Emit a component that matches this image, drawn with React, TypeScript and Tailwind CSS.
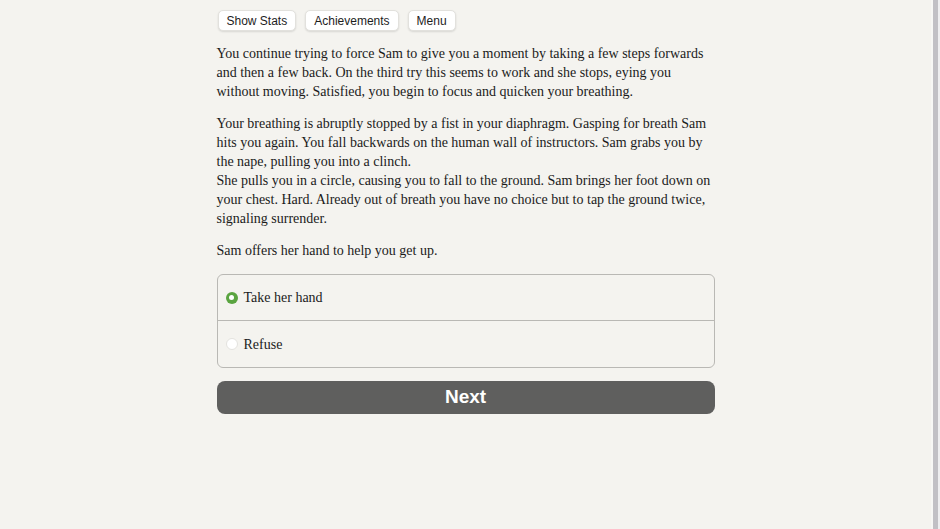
import { useState } from "react";

const serif = { fontFamily: '"Liberation Serif", "DejaVu Serif", serif' };

// Story text, kept with the same line breaks the game layout uses
const passage: string[][] = [
  [
    "You continue trying to force Sam to give you a moment by taking a few steps forwards",
    "and then a few back. On the third try this seems to work and she stops, eying you",
    "without moving. Satisfied, you begin to focus and quicken your breathing.",
  ],
  [
    "Your breathing is abruptly stopped by a fist in your diaphragm. Gasping for breath Sam",
    "hits you again. You fall backwards on the human wall of instructors. Sam grabs you by",
    "the nape, pulling you into a clinch.",
    "She pulls you in a circle, causing you to fall to the ground. Sam brings her foot down on",
    "your chest. Hard. Already out of breath you have no choice but to tap the ground twice,",
    "signaling surrender.",
  ],
  ["Sam offers her hand to help you get up."],
];

function TopButton({ label }: { label: string }) {
  return (
    <button className="h-[21px] rounded-[5px] border border-[#e2e1dd] bg-white px-[8px] text-[12px] leading-none text-[#1d1d1d] shadow-[0_1px_2px_rgba(0,0,0,0.12)] [font-family:'Liberation_Sans',Arial,sans-serif]">
      {label}
    </button>
  );
}

function Choice({ label, checked, onPick, last }: { label: string; checked: boolean; onPick: () => void; last?: boolean }) {
  return (
    <label className={`flex h-[46px] cursor-pointer items-center gap-[6px] px-[8px] ${last ? "" : "border-b border-[#b9b8b4]"}`} onClick={onPick}>
      {checked ? (
        <span className="grid h-[12px] w-[12px] place-items-center rounded-full bg-[#5aa440]">
          <span className="h-[5px] w-[5px] rounded-full bg-white" />
        </span>
      ) : (
        <span className="h-[12px] w-[12px] rounded-full border border-[#e4e3df] bg-white" />
      )}
      <span className="text-[14px] text-[#1b1b1b]" style={serif}>{label}</span>
    </label>
  );
}

export default function App() {
  const [pick, setPick] = useState(0);

  return (
    <div className="flex h-[529px] w-full bg-[#f4f3ef]">
      <div className="flex-1">
        <div className="mx-auto w-[498px] pt-[10px]">
          <div className="flex gap-[9px] pl-[1px]">
            <TopButton label="Show Stats" />
            <TopButton label="Achievements" />
            <TopButton label="Menu" />
          </div>

          <div className="mt-[13px] flex flex-col gap-[13px] text-[14px] leading-[19px] text-[#1b1b1b]" style={serif}>
            {passage.map((para, i) => (
              <p key={i}>
                {para.map((line, j) => (
                  <span key={j} className="block whitespace-nowrap">{line}</span>
                ))}
              </p>
            ))}
          </div>

          <div className="mt-[14px] rounded-[6px] border border-[#b9b8b4]">
            <Choice label="Take her hand" checked={pick === 0} onPick={() => setPick(0)} />
            <Choice label="Refuse" checked={pick === 1} onPick={() => setPick(1)} last />
          </div>

          <button className="mt-[13px] h-[33px] w-full rounded-[8px] bg-[#5f5f5e] text-[19px] font-bold text-white [font-family:'Liberation_Sans',Arial,sans-serif]">
            Next
          </button>
        </div>
      </div>
      <div className="flex w-[9px] bg-[#eeeef0]">
        <div className="w-[2px] bg-[#f7f7f5]" />
        <div className="w-[5px] bg-[#c1c0c5]" />
      </div>
    </div>
  );
}
